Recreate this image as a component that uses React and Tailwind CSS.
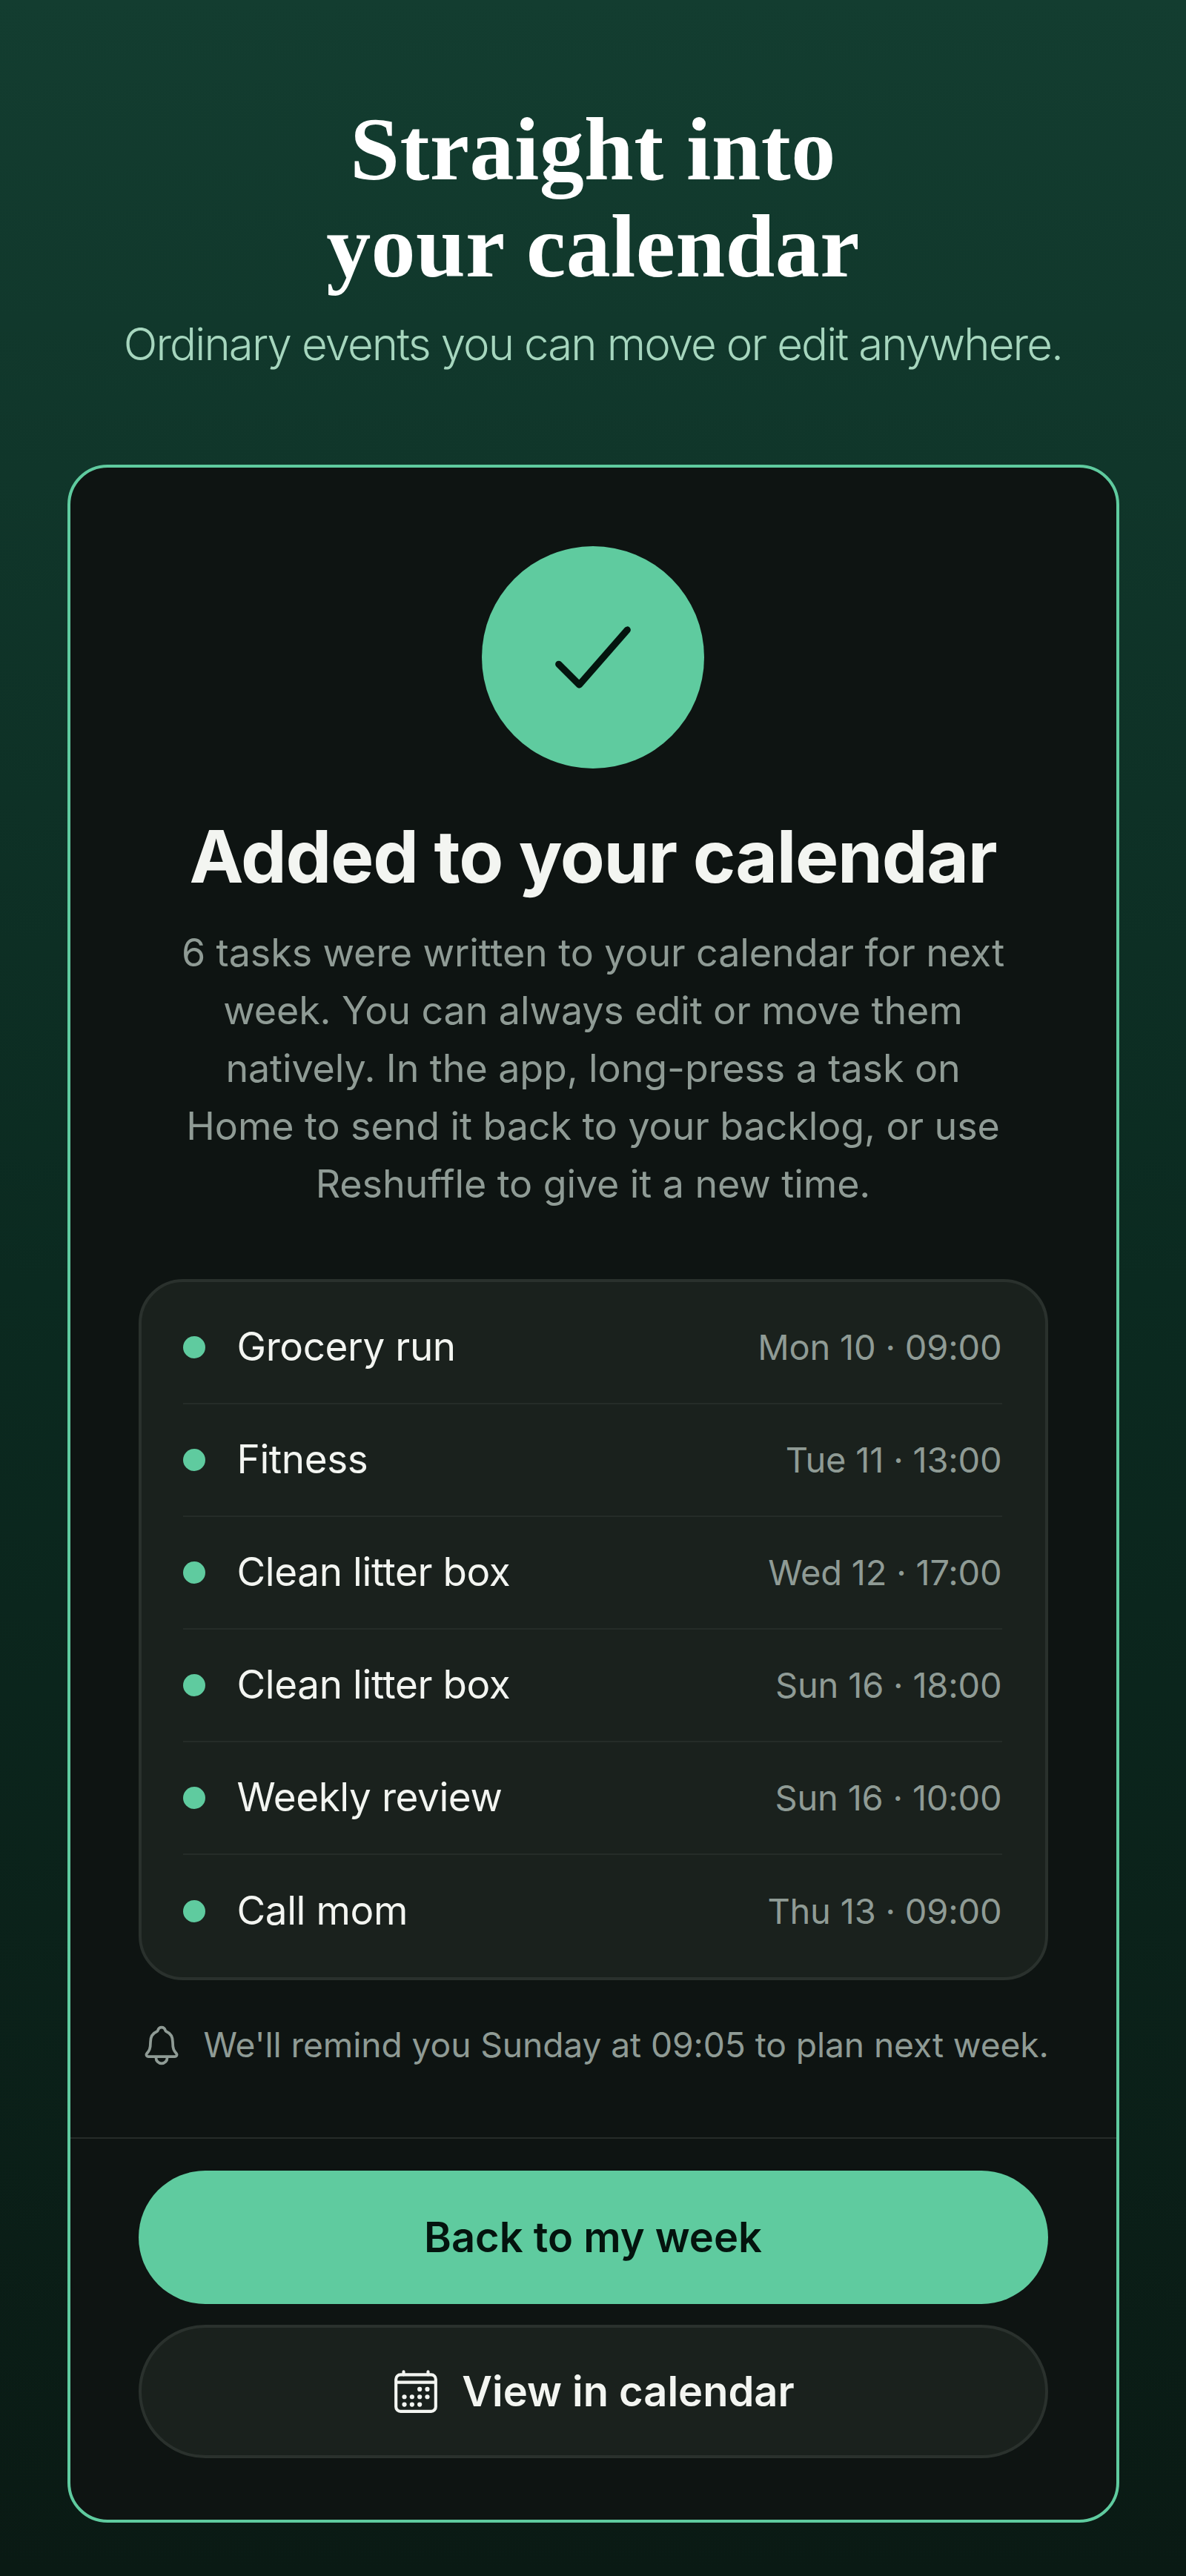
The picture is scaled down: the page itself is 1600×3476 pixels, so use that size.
import React from 'react';
import { IoCalendarOutline, IoNotificationsOutline, IoCheckmark } from 'react-icons/io5';

const tasks = [
  { name: 'Grocery run', when: 'Mon 10 · 09:00' },
  { name: 'Fitness', when: 'Tue 11 · 13:00' },
  { name: 'Clean litter box', when: 'Wed 12 · 17:00' },
  { name: 'Clean litter box', when: 'Sun 16 · 18:00' },
  { name: 'Weekly review', when: 'Sun 16 · 10:00' },
  { name: 'Call mom', when: 'Thu 13 · 09:00' },
];

function TaskRow({ task, last }) {
  return (
    <div className={`flex h-[152px] items-center justify-between ${last ? '' : 'border-b-2 border-[#252c28]'}`}>
      <div className="flex items-center gap-[43px]">
        <span className="h-[30px] w-[30px] rounded-full bg-[#5fcb9f]" />
        <span className="text-[53px] tracking-[-0.4px] text-[#f3f5f1]">{task.name}</span>
      </div>
      <span className="text-[47px] tracking-[-0.2px] text-[#8f9b95]">{task.when}</span>
    </div>
  );
}

export default function App() {
  return (
    <div className="flex h-[3476px] w-[1600px] flex-col items-center bg-gradient-to-b from-[#133d30] via-[#0b2a20] to-[#0a1a14] font-['Inter',sans-serif]">
      {/* Header */}
      <h1 className="mt-[136px] text-center font-['Liberation_Serif',serif] text-[120px] leading-[131px] font-bold tracking-[0.4px] text-white">
        Straight into
        <br />
        your calendar
      </h1>
      <p className="mt-[31px] text-center text-[60px] leading-[70px] font-light tracking-[-1.9px] text-[#a6d6be]">
        Ordinary events you can move or edit anywhere.
      </p>

      {/* Card */}
      <div className="mt-[128px] flex w-[1419px] flex-col items-center rounded-[54px] border-[4px] border-[#5fcb9f] bg-[#0e1412] pt-[106px]">
        <div className="flex h-[300px] w-[300px] items-center justify-center rounded-full bg-[#5fcb9f]">
          <IoCheckmark className="h-[148px] w-[148px] text-[#04140e]" />
        </div>
        <h2 className="mt-[59px] text-center text-[98px] leading-[120px] font-bold tracking-[-1.3px] text-[#f3f5f1]">
          Added to your calendar
        </h2>
        <p className="mt-[31px] w-[1180px] text-center text-[52px] leading-[78px] tracking-[-0.1px] text-[#8f9b95]">
          6 tasks were written to your calendar for next
          <br />
          week. You can always edit or move them
          <br />
          natively. In the app, long-press a task on
          <br />
          Home to send it back to your backlog, or use
          <br />
          Reshuffle to give it a new time.
        </p>

        {/* Tasks */}
        <div className="mt-[89px] w-[1227px] rounded-[60px] border-[4px] border-[#2a312d] bg-[#1a211d] py-[13px] pr-[58px] pl-[56px]">
          {tasks.map((task, i) => (
            <TaskRow key={i} task={task} last={i === tasks.length - 1} />
          ))}
        </div>

        {/* Reminder */}
        <div className="mt-[53px] flex w-[1227px] items-center gap-[27px] whitespace-nowrap pl-[1px]">
          <IoNotificationsOutline className="h-[60px] w-[60px] shrink-0 text-[#8f9b95]" />
          <span className="text-[46.2px] tracking-[-0.1px] text-[#8f9b95]">We'll remind you Sunday at 09:05 to plan next week.</span>
        </div>

        {/* Actions */}
        <div className="mt-[90px] flex w-full flex-col items-center gap-[28px] border-t-2 border-[#252c28] pt-[43px] pb-[83px]">
          <button className="h-[180px] w-[1227px] rounded-full bg-[#5fcb9f] text-[56px] font-semibold text-[#04140e]">
            Back to my week
          </button>
          <button className="flex h-[180px] w-[1227px] items-center justify-center gap-[29px] rounded-full border-[4px] border-[#2a312d] bg-[#1a211d] text-[56px] font-semibold text-[#f3f5f1]">
            <IoCalendarOutline className="h-[66px] w-[66px]" />
            View in calendar
          </button>
        </div>
      </div>
    </div>
  );
}
